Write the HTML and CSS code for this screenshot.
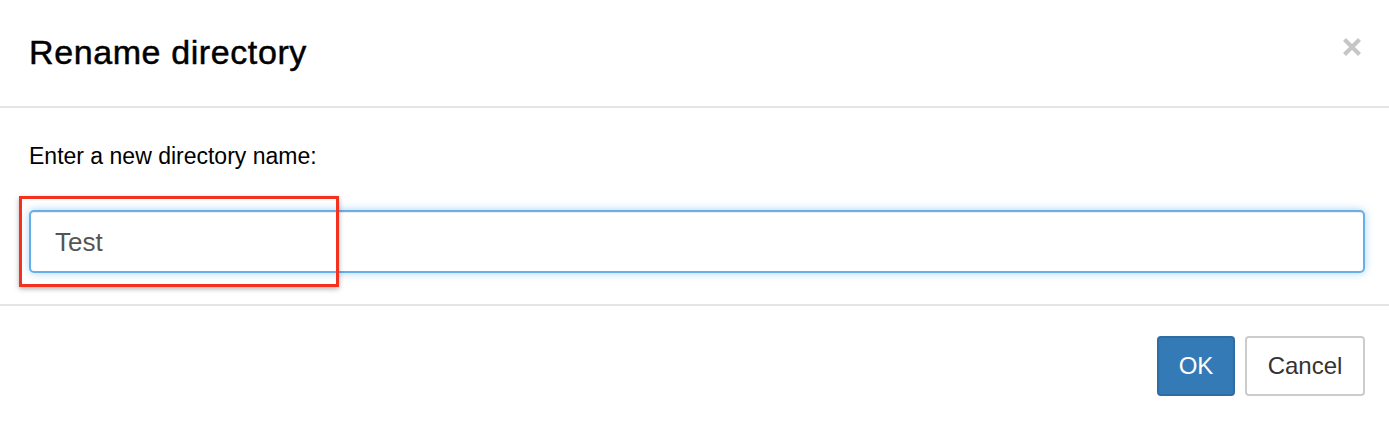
FILE: index.html
```html
<!DOCTYPE html>
<html>
<head>
<meta charset="utf-8">
<link rel="stylesheet" href="styles.css">
</head>
<body>
<div class="modal">
  <div class="modal-header">
    <h4 class="modal-title">Rename directory</h4>
    <button class="close" aria-label="Close">
      <svg width="20" height="20" viewBox="0 0 20 20"><path d="M2.5 2.5 L17.5 17.5 M17.5 2.5 L2.5 17.5" stroke="#c6c6c6" stroke-width="4.2" stroke-linecap="butt"/></svg>
    </button>
  </div>
  <div class="modal-body">
    <p class="label">Enter a new directory name:</p>
    <input class="field" type="text" value="Test">
    <div class="annot"></div>
  </div>
  <div class="modal-footer">
    <button class="btn btn-primary">OK</button>
    <button class="btn btn-default">Cancel</button>
  </div>
</div>
</body>
</html>
```
FILE: styles.css
```css
html, body {
  margin: 0;
  padding: 0;
  background: #fff;
}
body {
  font-family: "Liberation Sans", Arial, Helvetica, sans-serif;
  color: #000;
  width: 1389px;
  height: 422px;
  overflow: hidden;
}
.modal {
  display: flex;
  flex-direction: column;
}
.modal-header {
  display: flex;
  align-items: flex-start;
  justify-content: space-between;
  padding: 28px 27px 30px 29px;
  border-bottom: 2px solid #e5e5e5;
  height: 48px;
}
.modal-title {
  margin: 0;
  font-size: 34px;
  line-height: 48px;
  font-weight: normal;
  letter-spacing: 0.6px;
  -webkit-text-stroke: 0.5px #000;
}
.close {
  border: 0;
  background: none;
  padding: 0;
  margin-top: 9px;
  width: 20px;
  height: 20px;
  display: block;
}
.close svg { display: block; }
.modal-body {
  position: relative;
  padding: 32px 24px 31px 29px;
  border-bottom: 2px solid #e5e5e5;
}
.label {
  margin: 0 0 38px 0;
  font-size: 23px;
  line-height: 32px;
  color: #000;
}
.field {
  display: block;
  box-sizing: border-box;
  width: 1336px;
  height: 63px;
  margin: 0;
  padding: 2px 20px 0 24px;
  border: 2px solid #66afe9;
  border-radius: 5px;
  font-family: "Liberation Sans", Arial, sans-serif;
  font-size: 26px;
  color: #555;
  outline: none;
  box-shadow: inset 0 1px 1px rgba(0,0,0,.075), 0 0 9px rgba(102,175,233,.55);
}
.annot {
  position: absolute;
  left: 19px;
  top: 88px;
  width: 314px;
  height: 85px;
  border: 3px solid #f4301f;
  box-shadow: 0 2px 5px rgba(0,0,0,.3);
  pointer-events: none;
}
.modal-footer {
  display: flex;
  justify-content: flex-end;
  gap: 10px;
  padding: 30px 24px 26px 29px;
}
.btn {
  box-sizing: border-box;
  height: 60px;
  font-family: "Liberation Sans", Arial, sans-serif;
  font-size: 24px;
  border-radius: 4px;
  border: 2px solid;
  margin: 0;
}
.btn-primary {
  width: 78px;
  background: #337ab7;
  border-color: #2e6da4;
  color: #fff;
}
.btn-default {
  width: 120px;
  background: #fff;
  border-color: #ccc;
  color: #333;
}
```
